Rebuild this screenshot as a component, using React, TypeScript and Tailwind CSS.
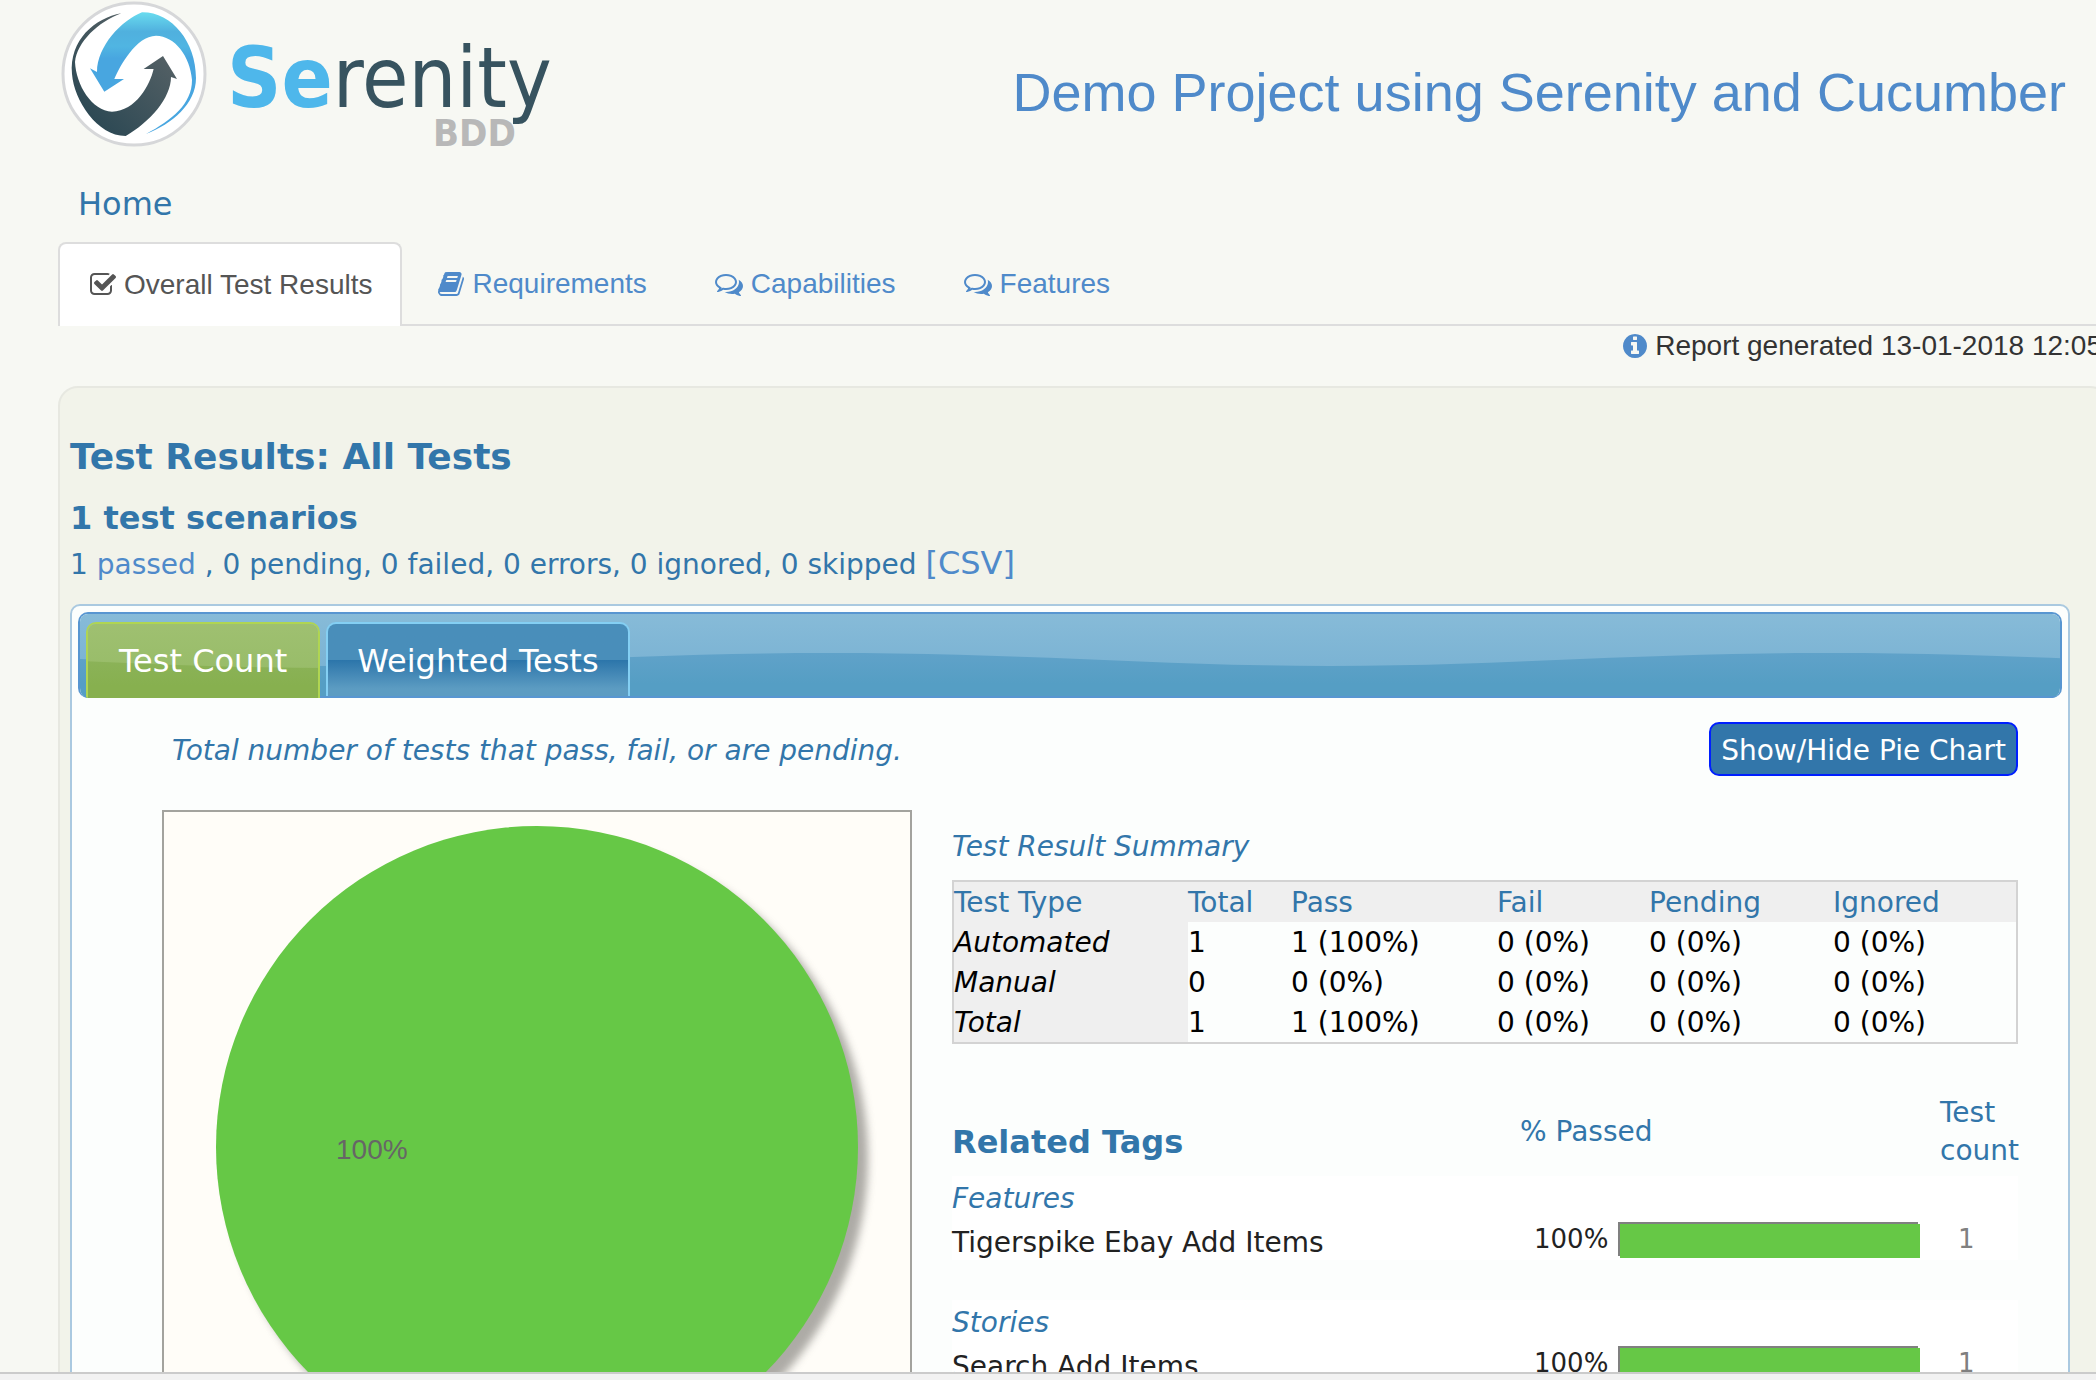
import React, { useId, useState } from "react";

const ICONS = {
  check: {
    box: "64 0 1664 1792",
    size: "w-[26px] h-7",
    d: "M1472 930v318q0 119-84.5 203.5t-203.5 84.5h-832q-119 0-203.5-84.5t-84.5-203.5v-832q0-119 84.5-203.5t203.5-84.5h832q63 0 117 25 15 7 18 23 3 17-9 29l-49 49q-10 10-23 10-3 0-9-2-23-6-45-6h-832q-66 0-113 47t-47 113v832q0 66 47 113t113 47h832q66 0 113-47t47-113v-254q0-13 9-22l64-64q10-10 23-10 6 0 12 3 20 8 20 29zm231-489l-814 814q-24 24-57 24t-57-24l-430-430q-24-24-24-57t24-57l110-110q24-24 57-24t57 24l263 263 647-647q24-24 57-24t57 24l110 110q24 24 24 57t-24 57z",
  },
  book: {
    box: "64 0 1664 1792",
    size: "w-[26px] h-7",
    d: "M1703 478q40 57 18 129l-275 906q-19 64-76.5 107.5t-122.5 43.5h-923q-77 0-148.5-53.5t-99.5-131.5q-24-67-2-127 0-4 3-27t4-37q1-8-3-21.5t-3-19.5q2-11 8-21t16.5-23.5 16.5-23.5q23-38 45-91.5t30-91.5q3-10 .5-30t-.5-28q3-11 17-28t17-23q21-36 42-92t25-90q1-9-2.5-32t.5-28q4-13 22-30.5t22-22.5q19-26 42.5-84.5t27.5-96.5q1-8-3-25.5t-2-26.5q2-8 9-18t18-23 17-21q8-12 16.5-30.5t15-35 16-36 19.5-32 26.5-23.5 36-11.5 47.5 5.5l-1 3q38-9 51-9h761q74 0 114 56t18 130l-274 906q-36 119-71.5 153.5t-128.5 34.5h-869q-27 0-38 15-11 16-1 43 24 70 144 70h923q29 0 56-15.5t35-41.5l300-987q7-22 5-57 38 15 59 43zm-1064 2q-4 13 2 22.5t20 9.5h608q13 0 25.5-9.5t16.5-22.5l21-64q4-13-2-22.5t-20-9.5h-608q-13 0-25.5 9.5t-16.5 22.5zm-83 256q-4 13 2 22.5t20 9.5h608q13 0 25.5-9.5t16.5-22.5l21-64q4-13-2-22.5t-20-9.5h-608q-13 0-25.5 9.5t-16.5 22.5z",
  },
  comments: {
    box: "0 0 1792 1792",
    size: "w-7 h-7",
    d: "M704 384q-153 0-286 52t-211.5 141-78.5 191q0 82 53 158t149 132l97 56-35 84q34-20 62-39l44-31 53 10q78 14 153 14 153 0 286-52t211.5-141 78.5-191-78.5-191-211.5-141-286-52zm0-128q191 0 353.5 68.5t256.5 186.5 94 257-94 257-256.5 186.5-353.5 68.5q-86 0-176-16-124 88-278 128-36 9-86 16h-3q-11 0-20.5-8t-11.5-21q-1-3-1-6.5t.5-6.5 2-6l2.5-5 3.5-5.5 4-5 4.5-5 4-4.5q5-6 23-25t26-29.5 22.5-29 25-38.5 20.5-44q-124-72-195-177t-71-224q0-139 94-257t256.5-186.5 353.5-68.5zm822 1169q10 24 20.5 44t25 38.5 22.5 29 26 29.5 23 25q1 1 4 4.5t4.5 5 4 5 3.5 5.5l2.5 5 2 6 .5 6.5-1 6.5q-3 14-13 22t-22 7q-50-7-86-16-154-40-278-128-90 16-176 16-271 0-472-132 58 4 88 4 161 0 309-45t264-129q125-92 192-212t67-254q0-77-23-152 129 71 204 178t75 230q0 120-71 224.5t-195 176.5z",
  },
  info: {
    box: "128 0 1536 1792",
    size: "w-6 h-7",
    d: "M1152 1376v-160q0-14-9-23t-23-9h-96v-512q0-14-9-23t-23-9h-320q-14 0-23 9t-9 23v160q0 14 9 23t23 9h96v320h-96q-14 0-23 9t-9 23v160q0 14 9 23t23 9h448q14 0 23-9t9-23zm-128-896v-160q0-14-9-23t-23-9h-192q-14 0-23 9t-9 23v160q0 14 9 23t23 9h192q14 0 23-9t9-23zm640 416q0 209-103 385.5t-279.5 279.5-385.5 103-385.5-103-279.5-279.5-103-385.5 103-385.5 279.5-279.5 385.5-103 385.5 103 279.5 279.5 103 385.5z",
  },
};

function Icon({ name }: { name: keyof typeof ICONS }) {
  const icon = ICONS[name];
  return (
    <svg viewBox={icon.box} className={`${icon.size} shrink-0 fill-current`} aria-hidden="true">
      <path d={icon.d} />
    </svg>
  );
}

function Logo() {
  return (
    <svg viewBox="60 0 510 156" className="h-[156px] w-[510px] shrink-0" role="img" aria-label="Serenity BDD">
      <defs>
        <linearGradient id="sky" x1="0" y1="0" x2="0" y2="1">
          <stop offset="0" stopColor="#69dcef" />
          <stop offset="0.16" stopColor="#50b0de" />
          <stop offset="0.28" stopColor="#50b5e2" />
          <stop offset="0.38" stopColor="#48a6e0" />
          <stop offset="1" stopColor="#48a6e0" />
        </linearGradient>
        <linearGradient id="slate" x1="0" y1="1" x2="0.7" y2="0.2">
          <stop offset="0" stopColor="#234350" />
          <stop offset="1" stopColor="#525f64" />
        </linearGradient>
      </defs>
      <circle cx="134" cy="74" r="71" fill="#fff" stroke="#d6d7d9" strokeWidth="3" />
      <path
        fill="url(#slate)"
        d="M121.4 13.3C95 18 69 40 72 74C74 100 97 136 125.7 136C150 122 171 98 171 77L177 79L163 56L143.6 69L153.6 69C150 85 136 111 112 111.7C92 111 76 85 75 62C77 42 98 22 121.4 13.3Z"
      />
      <path
        fill="url(#sky)"
        d="M142 12.3C172 12 196 42 196 78C196 104 172 124 146 134C172 120 192 104 192 80C190 56 175 36 156 35.7C136 36 120 66 114.3 79L124 79L104.3 91.7L90 68.3L97 72C97 46 122 20 142 12.3Z"
      />
      <text x="227" y="107" fontSize="84" fontFamily='"DejaVu Sans Condensed", "DejaVu Sans", sans-serif' fill="#37535f">
        <tspan fontWeight="700" fill="#4eb7eb">Se</tspan>renity
      </text>
      <text x="433" y="146" fontSize="38" fontWeight="700" fontFamily='"DejaVu Sans Condensed", "DejaVu Sans", sans-serif' fill="#b8b8b8">
        BDD
      </text>
    </svg>
  );
}

/* Glossy wave that repeats along the tab bar */
function Wave({ top, bottom, light, dark, shift = 0 }: { top: string; bottom: string; light: string; dark: string; shift?: number }) {
  const id = useId();
  return (
    <svg className="absolute inset-0 h-full w-full" aria-hidden="true">
      <defs>
        <linearGradient id={`${id}a`} x1="0" y1="0" x2="0" y2="1">
          <stop offset="0" stopColor={light} />
          <stop offset="1" stopColor={top} />
        </linearGradient>
        <linearGradient id={`${id}b`} x1="0" y1="0" x2="0" y2="1">
          <stop offset="0" stopColor={dark} />
          <stop offset="0.6" stopColor={bottom} />
          <stop offset="1" stopColor={bottom} />
        </linearGradient>
        <pattern id={`${id}p`} x={-shift} y={-shift} width="1000" height="90" patternUnits="userSpaceOnUse">
          <rect width="1000" height="90" fill={`url(#${id}a)`} />
          <path d="M0 45C80 48.3 160 52 250 52S420 48.3 500 45S660 39 750 39S920 41.7 1000 45V90H0Z" fill={`url(#${id}b)`} />
        </pattern>
      </defs>
      <rect width="100%" height="100%" fill={`url(#${id}p)`} />
    </svg>
  );
}

const NAV: { label: string; icon: keyof typeof ICONS; active?: boolean }[] = [
  { label: "Overall Test Results", icon: "check", active: true },
  { label: "Requirements", icon: "book" },
  { label: "Capabilities", icon: "comments" },
  { label: "Features", icon: "comments" },
];

const SUMMARY = [
  ["Automated", "1", "1 (100%)", "0 (0%)", "0 (0%)", "0 (0%)"],
  ["Manual", "0", "0 (0%)", "0 (0%)", "0 (0%)", "0 (0%)"],
  ["Total", "1", "1 (100%)", "0 (0%)", "0 (0%)", "0 (0%)"],
];

const TAGS = [
  { group: "Features", name: "Tigerspike Ebay Add Items", passed: 100, count: 1 },
  { group: "Stories", name: "Search Add Items", passed: 100, count: 1 },
];

function PieChart() {
  return (
    <div className="h-[750px] w-[750px] shrink-0 overflow-hidden border-2 border-[#a3a39e] bg-[#fffdf8]">
      <svg viewBox="0 0 746 746" className="h-full w-full" role="img" aria-label="Passing tests: 100%">
        <defs>
          <filter id="soft" x="-5%" y="-5%" width="110%" height="110%">
            <feGaussianBlur stdDeviation="4" />
          </filter>
        </defs>
        <circle cx="383" cy="346" r="321" fill="#77756f" opacity="0.6" filter="url(#soft)" />
        <circle cx="373" cy="335" r="321" fill="#66c846" />
        <text x="172" y="347" fontSize="28" fontFamily='"Liberation Sans", Arial, sans-serif' fill="#666">
          100%
        </text>
      </svg>
    </div>
  );
}

function TagRow({ group, name, passed, count }: (typeof TAGS)[number]) {
  return (
    <div className="mb-10 bg-white">
      <h4 className="h-10 pt-1 text-[28px] leading-[38px] italic text-[#3276aa]">{group}</h4>
      <div className="flex h-11 items-center pt-0.5 text-[#222]">
        <a href="#tag" className="flex-1 pt-2 text-[28px] leading-[38px]">{name}</a>
        <span className="w-[72px] shrink-0 text-right text-[26px] leading-8">{passed}%</span>
        <div className="ml-3 h-[34px] w-[300px] shrink-0 bg-[#808080]">
          <div className="relative top-0.5 left-0.5 h-full bg-[#66c846]" style={{ width: `${passed}%` }} />
        </div>
        <span className="w-[100px] shrink-0 pl-10 text-[26px] leading-8 text-[#808080]">{count}</span>
      </div>
    </div>
  );
}

export default function App() {
  const [pie, setPie] = useState(true);
  return (
    <div className="flex h-screen flex-col overflow-hidden bg-[#f7f8f3] font-['DejaVu_Sans',Verdana,sans-serif] text-[28px] text-[#3276aa]">
      <div className="min-h-0 flex-1 overflow-hidden">
        <header className="flex justify-between pr-[30px] pl-[60px]">
          <Logo />
          <h1 className="mt-[56px] font-['Liberation_Sans',Arial,sans-serif] text-[54px] leading-[72px] font-light whitespace-nowrap text-[#4f8aca]">
            Demo Project using Serenity and Cucumber
          </h1>
        </header>

        <a href="#home" className="mt-[29px] ml-[78px] block w-fit text-[32px] leading-[39px]">Home</a>

        <nav className="ml-[58px] flex gap-1 border-b-2 border-[#ddd] pt-[18px] font-['Liberation_Sans',Arial,sans-serif]">
          {NAV.map((n) => (
            <a
              key={n.label}
              href="#report"
              className={
                n.active
                  ? "-mb-0.5 flex h-[84px] items-center gap-2 rounded-t-lg border-2 border-b-0 border-[#ddd] bg-white pr-7 pl-[30px] text-[#555]"
                  : "flex h-[82px] items-center gap-2 px-8 pt-0.5 text-[#4f8aca]"
              }
            >
              <Icon name={n.icon} />
              {n.label}
            </a>
          ))}
        </nav>

        <p className="-mr-1.5 flex items-center justify-end gap-2 pt-0.5 font-['Liberation_Sans',Arial,sans-serif] leading-9 whitespace-nowrap text-[#333]">
          <span className="text-[#4f8aca]"><Icon name="info" /></span>
          Report generated 13-01-2018 12:05
        </p>

        <main className="mt-[22px] -mr-[14px] ml-[58px] rounded-[20px] border-2 border-[#e7e8e1] bg-[#f2f3ea] pt-[46px] pr-[38px] pb-10 pl-2.5">
          <h2 className="text-4xl leading-[46px] font-bold">Test Results: All Tests</h2>
          <h3 className="mt-[17px] text-[32px] leading-[42px] font-bold">1 test scenarios</h3>
          <p className="pt-px leading-[46px]">
            1 <a href="#passed" className="text-[#4f8aca]">passed</a> , 0 pending, 0 failed, 0 errors, 0 ignored, 0 skipped{" "}
            <a href="#csv" className="text-[32px] text-[#4f8aca]">[CSV]</a>
          </p>

          <section className="mt-4 rounded-[10px] border-2 border-[#aac9e0] bg-[#fcfefd] p-1.5">
            <div role="tablist" className="relative flex h-[86px] items-end gap-1.5 overflow-hidden rounded-[10px] border-2 border-b-0 border-[#5896d1] pl-1.5 text-[32px] text-white">
              <Wave light="#87bbd8" top="#72add0" dark="#60a2c9" bottom="#559ec4" />
              <div className="absolute inset-x-0 bottom-0 h-0.5 bg-[#5896d1]" />
              <button role="tab" aria-selected="true" className="relative h-[76px] overflow-hidden rounded-t-[10px] border-2 border-b-0 border-[#b0d552] px-[31px]">
                <Wave light="#a0c172" top="#93b963" dark="#8cb35a" bottom="#87b04f" shift={8} />
                <span className="relative">Test Count</span>
              </button>
              <button role="tab" aria-selected="false" className="relative mb-0.5 h-[74px] rounded-t-[10px] border-2 border-b-0 border-[#84cff3] bg-linear-to-b from-[#498eba] from-50% via-[#2b75aa] via-50% to-[#5c9cc2] to-90% px-[29px] pt-0.5">
                Weighted Tests
              </button>
            </div>

            <div className="pt-6 pr-[44px] pl-[84px]">
              <div className="flex items-center justify-between pl-2.5">
                <p className="pt-[3px] italic">Total number of tests that pass, fail, or are pending.</p>
                <button
                  onClick={() => setPie(!pie)}
                  className="h-[54px] rounded-[10px] border-2 border-[#001fff] bg-[#3276aa] px-2.5 pt-[3px] text-white"
                >
                  Show/Hide Pie Chart
                </button>
              </div>

              <div className="mt-[34px] flex gap-10">
                {pie && <PieChart />}
                <div className="min-w-0 flex-1">
                  <h4 className="mt-4 leading-[42px] italic">Test Result Summary</h4>
                  <table className="mt-3 w-full table-fixed border-collapse border-2 border-[#d3d3d3] text-left text-black">
                    <colgroup>
                      <col className="w-[235px]" />
                      <col className="w-[103px]" />
                      <col className="w-[206px]" />
                      <col className="w-[152px]" />
                      <col className="w-[184px]" />
                      <col />
                    </colgroup>
                    <thead className="bg-[#efefef] text-[#3276aa]">
                      <tr className="h-10">
                        {["Test Type", "Total", "Pass", "Fail", "Pending", "Ignored"].map((h) => (
                          <th key={h} scope="col" className="p-0 pt-0.5 leading-[38px] font-normal">{h}</th>
                        ))}
                      </tr>
                    </thead>
                    <tbody>
                      {SUMMARY.map(([type, ...cells]) => (
                        <tr key={type} className="h-10">
                          <th scope="row" className="bg-[#efefef] p-0 pt-0.5 leading-[38px] font-normal italic">{type}</th>
                          {cells.map((c, i) => (
                            <td key={i} className="p-0 pt-0.5 leading-[38px]">{c}</td>
                          ))}
                        </tr>
                      ))}
                    </tbody>
                  </table>

                  <div className="mt-11 flex h-[88px] items-center">
                    <h3 className="flex-1 pt-5 text-[32px] leading-10 font-bold">Related Tags</h3>
                    <span className="w-[420px] shrink-0">% Passed</span>
                    <span className="w-[78px] shrink-0 leading-[38px]">Test count</span>
                  </div>
                  {TAGS.map((t) => (
                    <TagRow key={t.group} {...t} />
                  ))}
                </div>
              </div>
            </div>
          </section>
        </main>
      </div>
      <footer className="h-2 shrink-0 border-t-2 border-[#cbcbcb] bg-[#f2f2f2]" />
    </div>
  );
}
